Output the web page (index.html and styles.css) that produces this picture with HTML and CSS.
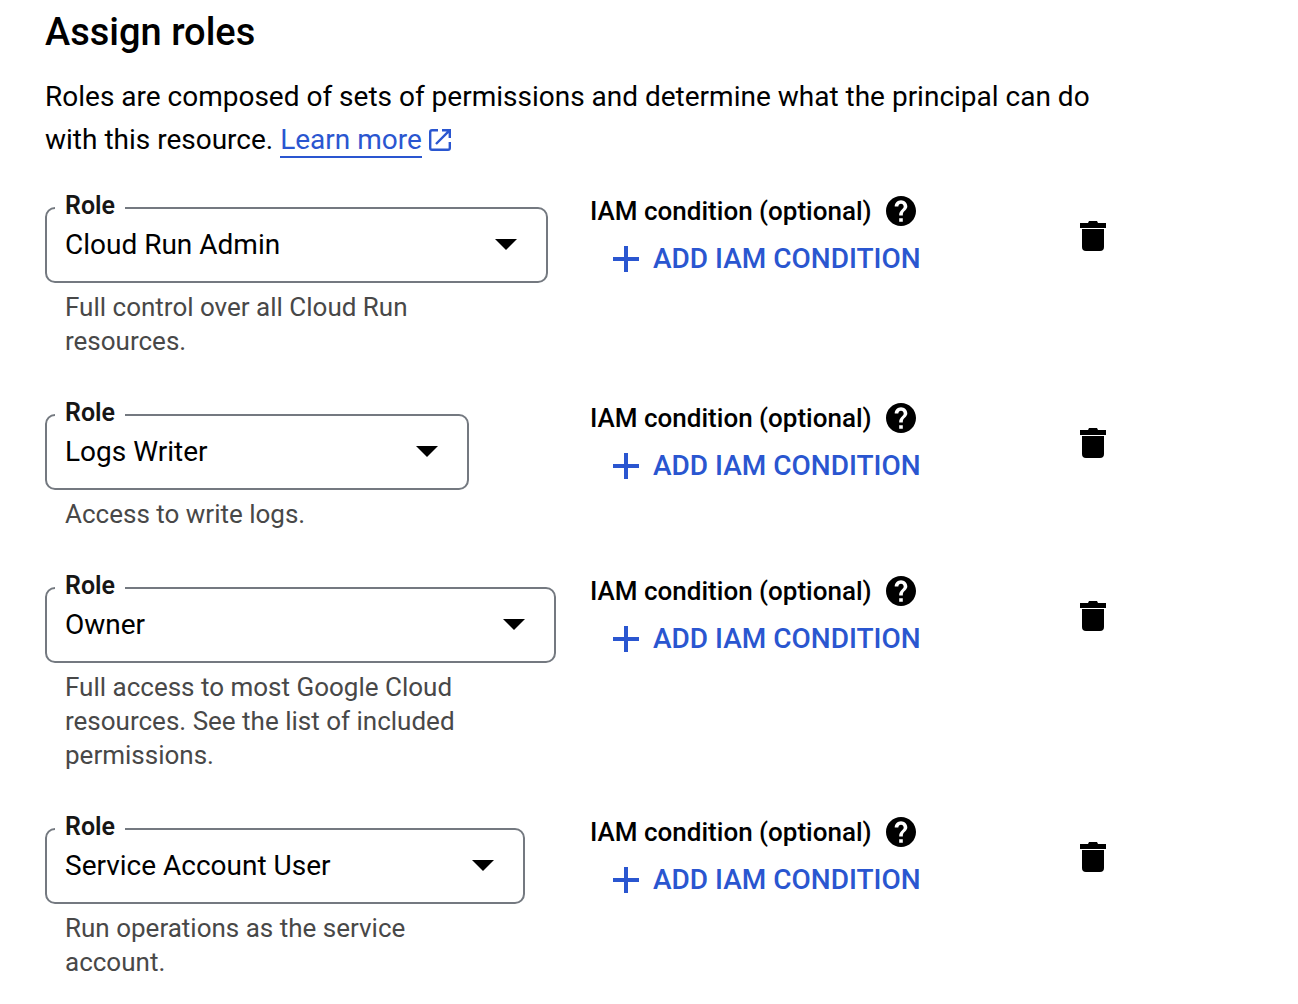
FILE: index.html
```html
<!DOCTYPE html>
<html lang="en">
<head>
<meta charset="utf-8">
<title>Assign roles</title>
<link rel="stylesheet" href="styles.css">
</head>
<body>
<svg class="sprite" aria-hidden="true">
  <symbol id="help" viewBox="2 2 20 20"><path d="M12 2C6.480 2 2 6.480 2 12s4.480 10 10 10 10-4.480 10-10S17.520 2 12 2zm1.200 17.200h-2.400v-2.400h2.400v2.400zm1.870-7.950l-.9.920C13.450 12.900 13.200 13.500 13.200 15h-2.400v-.5c0-1.100.45-2.100 1.170-2.830l1.240-1.260c.37-.36.590-.86.590-1.410 0-1-.8-1.800-1.800-1.800s-1.800.8-1.800 1.800H7.800c0-2.310 1.890-4.200 4.200-4.200s4.200 1.890 4.200 4.200c0 .88-.56 1.680-1.130 2.250z"/></symbol>
  <symbol id="plus" viewBox="0 0 26 26"><path d="M11 0h4v11h11v4H15v11h-4V15H0v-4h11z"/></symbol>
  <symbol id="trash" viewBox="0 0 26 30"><path d="M0 2h8l1-2h8l1 2h8v5H0zM2 8h22v18q0 4-4 4H6q-4 0-4-4z"/></symbol>
  <symbol id="arrow" viewBox="0 0 22 11"><path d="M0 0h22L11 11z"/></symbol>
</svg>
<main class="panel">
  <h1 class="title">Assign roles</h1>
  <p class="intro">Roles are composed of sets of permissions and determine what the principal can do with this resource. <a class="link" href="#">Learn more</a><svg class="external" viewBox="0 0 22 22" aria-hidden="true"><path d="M9 1.200H3q-1.800 0-1.800 1.800v16q0 1.800 1.800 1.800h16q1.800 0 1.800-1.800v-6M13 1.200h7.800V9M20.800 1.200L7 15"/></svg></p>

  <div class="roles">
    <section class="role">
      <div class="role-main">
        <div class="field field-wide">
          <label class="field-label" for="role1">Role</label>
          <select class="select" id="role1"><option>Cloud Run Admin</option></select>
          <svg class="arrow" aria-hidden="true"><use href="#arrow"/></svg>
        </div>
        <p class="hint">Full control over all Cloud Run resources.</p>
      </div>
      <div class="condition">
        <div class="condition-head">IAM condition (optional) <button class="icon-button" aria-label="Help"><svg class="help"><use href="#help"/></svg></button></div>
        <button class="add"><svg class="plus"><use href="#plus"/></svg>ADD IAM CONDITION</button>
      </div>
      <button class="icon-button delete" aria-label="Delete role"><svg class="trash"><use href="#trash"/></svg></button>
    </section>

    <section class="role">
      <div class="role-main">
        <div class="field field-narrow">
          <label class="field-label" for="role2">Role</label>
          <select class="select" id="role2"><option>Logs Writer</option></select>
          <svg class="arrow" aria-hidden="true"><use href="#arrow"/></svg>
        </div>
        <p class="hint">Access to write logs.</p>
      </div>
      <div class="condition">
        <div class="condition-head">IAM condition (optional) <button class="icon-button" aria-label="Help"><svg class="help"><use href="#help"/></svg></button></div>
        <button class="add"><svg class="plus"><use href="#plus"/></svg>ADD IAM CONDITION</button>
      </div>
      <button class="icon-button delete" aria-label="Delete role"><svg class="trash"><use href="#trash"/></svg></button>
    </section>

    <section class="role">
      <div class="role-main">
        <div class="field field-full">
          <label class="field-label" for="role3">Role</label>
          <select class="select" id="role3"><option>Owner</option></select>
          <svg class="arrow" aria-hidden="true"><use href="#arrow"/></svg>
        </div>
        <p class="hint">Full access to most Google Cloud resources. See the list of included permissions.</p>
      </div>
      <div class="condition">
        <div class="condition-head">IAM condition (optional) <button class="icon-button" aria-label="Help"><svg class="help"><use href="#help"/></svg></button></div>
        <button class="add"><svg class="plus"><use href="#plus"/></svg>ADD IAM CONDITION</button>
      </div>
      <button class="icon-button delete" aria-label="Delete role"><svg class="trash"><use href="#trash"/></svg></button>
    </section>

    <section class="role">
      <div class="role-main">
        <div class="field field-medium">
          <label class="field-label" for="role4">Role</label>
          <select class="select" id="role4"><option>Service Account User</option></select>
          <svg class="arrow" aria-hidden="true"><use href="#arrow"/></svg>
        </div>
        <p class="hint">Run operations as the service account.</p>
      </div>
      <div class="condition">
        <div class="condition-head">IAM condition (optional) <button class="icon-button" aria-label="Help"><svg class="help"><use href="#help"/></svg></button></div>
        <button class="add"><svg class="plus"><use href="#plus"/></svg>ADD IAM CONDITION</button>
      </div>
      <button class="icon-button delete" aria-label="Delete role"><svg class="trash"><use href="#trash"/></svg></button>
    </section>
  </div>
</main>
</body>
</html>
```
FILE: styles.css
```css
* { box-sizing: border-box; }
body {
  margin: 0;
  background: #fff;
  color: #000;
  font-family: Roboto, "Liberation Sans", sans-serif;
}
.sprite { display: none; }
svg { display: block; fill: currentColor; }
button {
  border: 0;
  padding: 0;
  background: none;
  color: inherit;
  font: inherit;
  cursor: pointer;
}
.panel { max-width: 1108px; padding: 8px 0 24px 45px; }
.title { margin: 0; font-size: 38px; line-height: 48px; font-weight: 500; }
.intro { margin: 19px 0 0; font-size: 28px; line-height: 43px; }
.link {
  border-bottom: 2px solid;
  color: #2a56d0;
  text-decoration: none;
}
.external {
  display: inline-block;
  width: 22px;
  height: 22px;
  margin-left: 7px;
  vertical-align: -2px;
  color: #2a56d0;
  fill: none;
  stroke: currentColor;
  stroke-width: 2.4;
}
.roles { display: grid; gap: 56px; margin-top: 46px; }
.role {
  display: grid;
  grid-template-columns: 511px 1fr auto;
  column-gap: 34px;
  align-items: start;
}
.field { position: relative; }
.field-full { width: 511px; }
.field-wide { width: 503px; }
.field-medium { width: 480px; }
.field-narrow { width: 424px; }
.select {
  display: block;
  width: 100%;
  height: 76px;
  padding: 0 64px 0 18px;
  border: 2px solid #747980;
  border-radius: 10px;
  background: #fff;
  color: #000;
  font: 28px/36px Roboto, "Liberation Sans", sans-serif;
  appearance: none;
}
.field-label {
  position: absolute;
  top: -16px;
  left: 10px;
  padding: 0 10px;
  background: #fff;
  color: #161616;
  font-size: 25px;
  line-height: 30px;
  font-weight: 600;
}
.arrow {
  position: absolute;
  top: 32px;
  right: 31px;
  width: 22px;
  height: 11px;
  pointer-events: none;
}
.hint {
  max-width: 440px;
  margin: 0;
  padding: 7px 20px 0;
  color: #484848;
  font-size: 26px;
  line-height: 34px;
}
.condition-head {
  display: flex;
  align-items: center;
  gap: 14px;
  height: 34px;
  margin-top: -13px;
  font-size: 26px;
  font-weight: 500;
}
.help { width: 30px; height: 30px; }
.add {
  display: flex;
  align-items: center;
  gap: 14px;
  margin: 12px 0 0 23px;
  color: #2a56d0;
  font-size: 28px;
  line-height: 38px;
  font-weight: 500;
}
.plus { width: 26px; height: 26px; }
.delete { margin: 14px 2px 0 0; }
.trash { width: 26px; height: 30px; }
```
